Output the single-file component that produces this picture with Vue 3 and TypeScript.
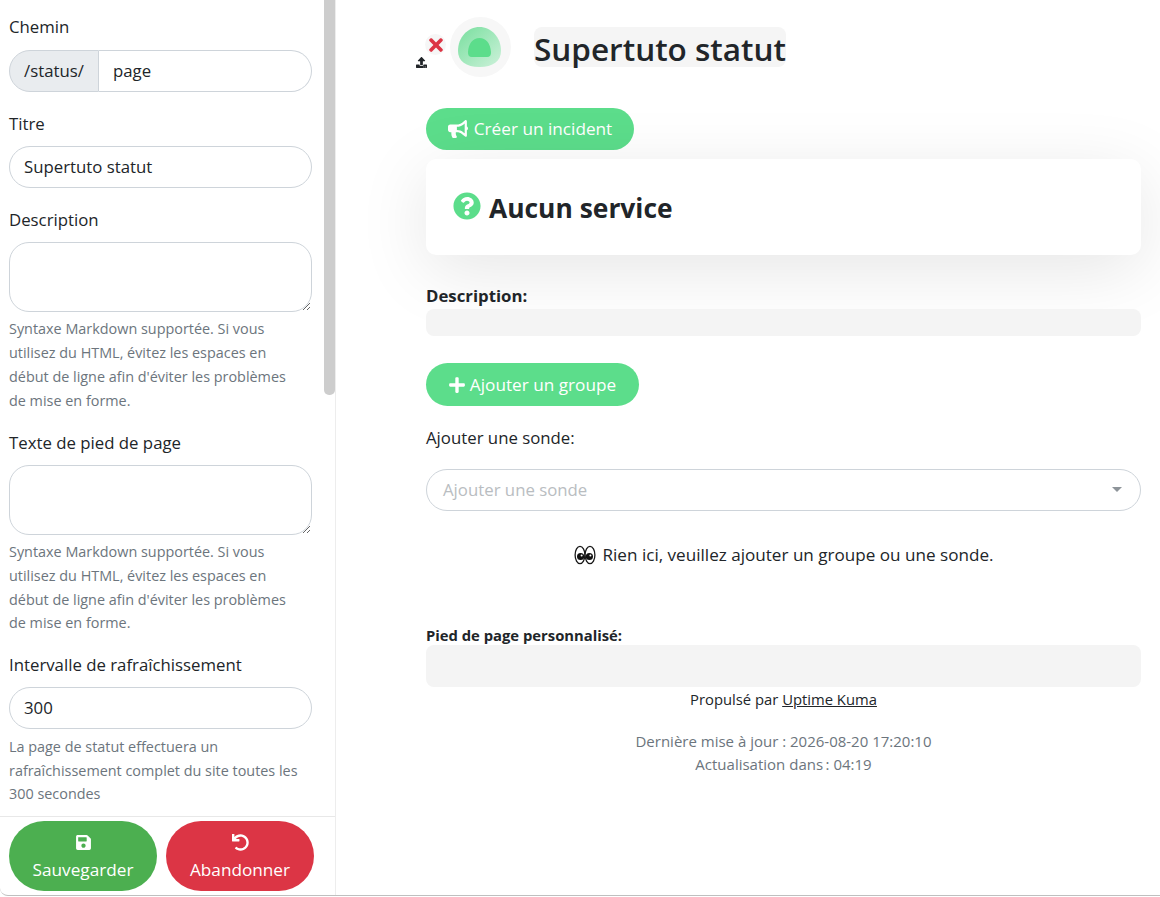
<script setup lang="ts">
const hint = "Syntaxe Markdown supportée. Si vous utilisez du HTML, évitez les espaces en début de ligne afin d'éviter les problèmes de mise en forme.";
</script>

<template>
  <div class="frame">
    <aside class="sidebar">
      <div class="scroll">
        <div class="fields">
          <div class="field">
            <label>Chemin</label>
            <div class="group">
              <span class="prefix">/status/</span>
              <input class="control joined" value="page" />
            </div>
          </div>
          <div class="field">
            <label>Titre</label>
            <input class="control" value="Supertuto statut" />
          </div>
          <div class="field">
            <label>Description</label>
            <textarea class="control area"></textarea>
            <p class="help">{{ hint }}</p>
          </div>
          <div class="field">
            <label>Texte de pied de page</label>
            <textarea class="control area"></textarea>
            <p class="help">{{ hint }}</p>
          </div>
          <div class="field field-last">
            <label>Intervalle de rafraîchissement</label>
            <input class="control" value="300" />
            <p class="help help-last">La page de statut effectuera un rafraîchissement complet du site toutes les 300 secondes</p>
          </div>
        </div>
        <div class="thumb"></div>
      </div>
      <div class="actions">
        <button class="big save">
          <svg viewBox="0 0 448 512" class="big-icon"><path fill="currentColor" d="M433.941 129.941l-83.882-83.882A48 48 0 0 0 316.118 32H48C21.49 32 0 53.49 0 80v352c0 26.51 21.49 48 48 48h352c26.51 0 48-21.49 48-48V163.882a48 48 0 0 0-14.059-33.941zM224 416c-35.346 0-64-28.654-64-64 0-35.346 28.654-64 64-64s64 28.654 64 64c0 35.346-28.654 64-64 64zm96-304.52V212c0 6.627-5.373 12-12 12H76c-6.627 0-12-5.373-12-12V108c0-6.627 5.373-12 12-12h228.52c3.183 0 6.235 1.264 8.485 3.515l3.48 3.48A11.996 11.996 0 0 1 320 111.48z"/></svg>
          <span>Sauvegarder</span>
        </button>
        <button class="big discard">
          <svg viewBox="0 0 512 512" class="big-icon"><path fill="currentColor" d="M212.333 224.333H12c-6.627 0-12-5.373-12-12V12C0 5.373 5.373 0 12 0h48c6.627 0 12 5.373 12 12v78.112C117.773 39.279 184.26 7.47 258.175 8.007c136.906.994 246.448 111.623 246.157 248.532C504.041 393.258 393.12 504 256.333 504c-64.089 0-122.496-24.313-166.51-64.215-5.099-4.622-5.334-12.554-.467-17.42l33.967-33.967c4.474-4.474 11.662-4.717 16.401-.525C170.76 415.336 211.58 432 256.333 432c97.268 0 176-78.716 176-176 0-97.267-78.716-176-176-176-58.496 0-110.28 28.476-142.274 72.333h98.274c6.627 0 12 5.373 12 12v48c0 6.627-5.373 12-12 12z"/></svg>
          <span>Abandonner</span>
        </button>
      </div>
    </aside>

    <main class="main">
      <header class="title-row">
        <div class="logo-wrap">
          <span class="logo-x">
            <svg viewBox="0 0 352 512"><path fill="currentColor" d="M242.72 256l100.07-100.07c12.28-12.28 12.28-32.19 0-44.48l-22.24-22.24c-12.28-12.28-32.19-12.28-44.48 0L176 189.28 75.93 89.21c-12.28-12.28-32.19-12.28-44.48 0L9.21 111.45c-12.28 12.28-12.28 32.19 0 44.48L109.28 256 9.21 356.07c-12.28 12.28-12.28 32.19 0 44.48l22.24 22.24c12.28 12.28 32.2 12.28 44.48 0L176 322.72l100.07 100.07c12.28 12.28 32.2 12.28 44.48 0l22.24-22.24c12.28-12.28 12.28-32.19 0-44.48L242.72 256z"/></svg>
          </span>
          <span class="logo-up">
            <svg viewBox="0 0 512 512"><path fill="currentColor" d="M296 384h-80c-13.3 0-24-10.7-24-24V192h-87.7c-17.8 0-26.7-21.5-14.1-34.1L242.3 5.7c7.5-7.5 19.8-7.5 27.3 0l152.2 152.2c12.6 12.6 3.7 34.1-14.1 34.1H320v168c0 13.3-10.7 24-24 24zm216-8v112c0 13.3-10.7 24-24 24H24c-13.3 0-24-10.7-24-24V376c0-13.3 10.7-24 24-24h136v8c0 30.9 25.1 56 56 56h80c30.9 0 56-25.1 56-56v-8h136c13.3 0 24 10.7 24 24zm-124 88c0-11-9-20-20-20s-20 9-20 20 9 20 20 20 20-9 20-20zm64 0c0-11-9-20-20-20s-20 9-20 20 9 20 20 20 20-9 20-20z"/></svg>
          </span>
          <div class="logo">
            <svg viewBox="0 0 43 40" width="43" height="40">
              <defs>
                <linearGradient id="blob" x1="0" y1="0" x2="1" y2="1">
                  <stop offset="0" stop-color="#78df9e" />
                  <stop offset="1" stop-color="#cdf1da" />
                </linearGradient>
              </defs>
              <path fill="url(#blob)" d="M21.5 0C33 0 43 10 43 24c0 10-8 16-21.500 16S0 34 0 24C0 10 10 0 21.500 0z"/>
              <path fill="#5cdd8b" d="M21.500 11c6.500 0 11 5.500 11.500 14 .2 3-1 5-4 5H14c-3 0-4.200-2-4-5 .5-8.500 5-14 11.500-14z"/>
            </svg>
          </div>
        </div>
        <h1 class="title">Supertuto statut</h1>
      </header>

      <button class="pill incident">
        <svg viewBox="0 0 576 512" class="pill-icon"><path fill="currentColor" d="M576 240c0-23.63-12.95-44.04-32-55.12V32.01C544 23.26 537.02 0 512 0c-7.12 0-14.19 2.38-19.98 7.02l-85.03 68.03C364.28 109.19 310.66 128 256 128H64c-35.35 0-64 28.65-64 64v96c0 35.35 28.65 64 64 64h33.7c-1.39 10.48-2.18 21.14-2.18 32 0 39.77 9.26 77.35 25.56 110.94 5.19 10.69 16.52 17.06 28.4 17.06h74.28c26.05 0 41.69-29.84 25.9-50.56-16.4-21.52-26.15-48.36-26.15-77.44 0-11.11 1.62-21.79 4.41-32H256c54.66 0 108.28 18.81 150.98 52.95l85.03 68.03a32.023 32.023 0 0 0 19.98 7.02c24.92 0 32-22.78 32-32V295.13C563.05 284.04 576 263.63 576 240zm-96 141.42l-33.05-26.44C392.95 311.78 325.12 288 256 288v-96c69.12 0 136.95-23.78 190.95-66.98L480 98.58v282.84z"/></svg>
        Créer un incident
      </button>

      <section class="card">
        <svg viewBox="0 0 512 512" class="q-icon"><path fill="#5cdd8b" d="M504 256c0 136.997-111.043 248-248 248S8 392.997 8 256C8 119.083 119.043 8 256 8s248 111.083 248 248zM262.655 90c-54.497 0-89.255 22.957-116.549 63.758-3.536 5.286-2.353 12.415 2.715 16.258l34.699 26.31c5.205 3.947 12.621 3.008 16.665-2.122 17.864-22.658 30.113-35.797 57.303-35.797 20.429 0 45.698 13.148 45.698 32.958 0 14.976-12.363 22.667-32.534 33.976C247.128 238.528 216 254.941 216 296v4c0 6.627 5.373 12 12 12h56c6.627 0 12-5.373 12-12v-1.333c0-28.462 83.186-29.647 83.186-106.667 0-58.002-60.165-102-116.531-102zM256 338c-25.365 0-46 20.635-46 46 0 25.364 20.635 46 46 46s46-20.636 46-46c0-25.365-20.635-46-46-46z"/></svg>
        <span>Aucun service</span>
      </section>

      <strong class="desc-label">Description:</strong>
      <div class="editable desc-box"></div>

      <button class="pill group-btn">
        <svg viewBox="0 0 448 512" class="plus-icon"><path fill="currentColor" d="M416 208H272V64c0-17.67-14.33-32-32-32h-32c-17.67 0-32 14.33-32 32v144H32c-17.67 0-32 14.33-32 32v32c0 17.67 14.33 32 32 32h144v144c0 17.67 14.33 32 32 32h32c17.67 0 32-14.33 32-32V304h144c17.67 0 32-14.33 32-32v-32c0-17.67-14.33-32-32-32z"/></svg>
        Ajouter un groupe
      </button>

      <div class="probe-label">Ajouter une sonde:</div>
      <div class="select">
        <span>Ajouter une sonde</span>
        <i class="caret"></i>
      </div>

      <div class="empty">
        <svg viewBox="0 0 22 20" class="eyes">
          <ellipse cx="6" cy="10" rx="4.900" ry="8.600" fill="#fff" stroke="#1a1a1a" stroke-width="1.300" />
          <ellipse cx="16" cy="10" rx="4.900" ry="8.600" fill="#fff" stroke="#1a1a1a" stroke-width="1.300" />
          <circle cx="6.600" cy="11.500" r="3.600" fill="#111" />
          <circle cx="15.400" cy="11.500" r="3.600" fill="#111" />
          <circle cx="7.600" cy="10.500" r="1" fill="#fff" />
          <circle cx="16.400" cy="10.500" r="1" fill="#fff" />
        </svg>
        <span>Rien ici, veuillez ajouter un groupe ou une sonde.</span>
      </div>

      <strong class="foot-label">Pied de page personnalisé:</strong>
      <div class="editable foot-box"></div>
      <div class="powered">Propulsé par <a>Uptime Kuma</a></div>
      <div class="updated">
        <div>Dernière mise à jour : 2026-08-20 17:20:10</div>
        <div>Actualisation dans&#8201;: 04:19</div>
      </div>
    </main>
  </div>
</template>

<style>
html, body { margin: 0; background: #fff; }
</style>

<style scoped>
.frame {
  --sans: "Open Sans", "Noto Sans", sans-serif;
  display: flex;
  height: 896px;
  box-sizing: border-box;
  overflow: hidden;
  border-bottom: 1px solid #bfbfbf;
  border-bottom-left-radius: 8px;
  font-family: var(--sans);
  font-size: 16.8px;
  line-height: 27.8px;
  color: #212529;
}
.sidebar {
  width: 336px;
  flex: none;
  box-sizing: border-box;
  border-right: 1px solid #ededed;
  display: flex;
  flex-direction: column;
}
.scroll {
  position: relative;
  height: 816px;
  flex: none;
  overflow: hidden;
}
.thumb {
  position: absolute;
  top: 0;
  right: 0;
  width: 11px;
  height: 395px;
  background: #cdcdcd;
  border-radius: 0 0 5px 5px;
}
.fields { padding: 13.2px 23px 0 9px; }
.field { margin-bottom: 17.5px; }
.field-last { margin-top: -2px; }
.field label { display: block; margin-bottom: 8.7px; color: #212529; }
.control {
  display: block;
  width: 100%;
  box-sizing: border-box;
  height: 42.4px;
  padding: 5px 14px 7px;
  border: 1px solid #ced4da;
  border-radius: 21px;
  font: inherit;
  color: #212529;
  background: #fff;
  outline: none;
}
.area { height: 70px; border-radius: 20px; resize: vertical; }
.group { display: flex; height: 42.4px; }
.prefix {
  flex: none;
  box-sizing: border-box;
  width: 90px;
  padding: 6px 0 6px 14px;
  background: #e9ecef;
  border: 1px solid #ced4da;
  border-radius: 21px 0 0 21px;
  color: #212529;
}
.joined { flex: 1; min-width: 0; border-left: 0; border-radius: 0 21px 21px 0; padding: 6px 14px; }
.help {
  margin: 5px 0 -1px;
  max-width: 295px;
  font-size: 14.4px;
  line-height: 23.7px;
  color: #6c757d;
}
.help-last { margin-top: 5.5px; }
.actions {
  flex: 1;
  display: flex;
  gap: 9px;
  padding: 4px 0 0 9px;
  border-top: 1px solid #e8e8e8;
}
.big {
  width: 148px;
  height: 70px;
  border: 0;
  border-radius: 35px;
  color: #fff;
  font-family: inherit;
  font-size: 17.2px;
  line-height: 26px;
  display: flex;
  flex-direction: column;
  align-items: center;
  justify-content: center;
  padding: 4px 0 0;
}
.big-icon { width: 17px; height: 17px; margin-bottom: 6px; }
.save { background: #4caf50; }
.discard { background: #dc3545; }

.main {
  flex: 1;
  min-width: 0;
  padding: 17px 19px 0 90px;
  display: flex;
  flex-direction: column;
  align-items: flex-start;
}
.title-row { display: flex; align-items: center; height: 60px; }
.logo-wrap { position: relative; width: 85px; height: 60px; }
.logo {
  position: absolute;
  left: 24px;
  top: 0;
  width: 61px;
  height: 60px;
  border-radius: 50%;
  background: #f7f7f7;
  display: flex;
  align-items: center;
  justify-content: center;
}
.logo svg { margin-left: -3px; }
.logo-x {
  position: absolute;
  z-index: 1;
  left: -1px;
  top: 17px;
  width: 21px;
  height: 21px;
  border-radius: 50%;
  background: #f6f6f6;
  color: #dc3545;
  display: flex;
  align-items: center;
  justify-content: center;
}
.logo-x svg { width: 14px; height: 20px; }
.logo-up {
  position: absolute;
  z-index: 1;
  left: -15px;
  top: 35px;
  width: 21px;
  height: 21px;
  border-radius: 50%;
  background: #fff;
  color: #212529;
  display: flex;
  align-items: center;
  justify-content: center;
}
.logo-up svg { width: 11px; height: 11px; }
.title {
  margin: 0 0 0 23px;
  padding: 0;
  height: 40px;
  background: #f5f5f5;
  border-radius: 8px;
  font-size: 31.5px;
  font-weight: 600;
  line-height: 44px;
  white-space: nowrap;
}
.pill {
  border: 0;
  border-radius: 22px;
  background: #5cdd8b;
  color: #fff;
  font: inherit;
  font-size: 17.2px;
  display: flex;
  align-items: center;
  justify-content: center;
  padding: 0;
}
.incident { width: 208px; height: 42px; margin-top: 31px; gap: 6px; }
.pill-icon { width: 20px; height: 18px; }
.card {
  align-self: stretch;
  height: 96px;
  margin-top: 9px;
  box-sizing: border-box;
  border-radius: 10px;
  background: #fff;
  box-shadow: 0 15px 70px rgba(0, 0, 0, 0.1);
  display: flex;
  align-items: center;
  gap: 8px;
  padding: 0 27px;
  font-size: 26.4px;
  font-weight: 700;
  line-height: 1;
}
.card span { margin-top: 2px; }
.q-icon { width: 28px; height: 28px; margin-top: -2px; }
.desc-label { margin-top: 27.6px; font-weight: 700; line-height: 26.4px; }
.editable { align-self: stretch; background: #f4f4f4; border-radius: 8px; }
.desc-box { height: 27px; }
.group-btn { width: 213px; height: 43px; margin-top: 27px; gap: 5px; }
.plus-icon { width: 16px; height: 18px; }
.probe-label { margin-top: 17.6px; }
.select {
  align-self: stretch;
  box-sizing: border-box;
  height: 42px;
  margin-top: 17.6px;
  border: 1px solid #ced4da;
  border-radius: 21px;
  padding: 0 16px;
  display: flex;
  align-items: center;
  justify-content: space-between;
  color: #b9bdc1;
}
.caret {
  width: 0;
  height: 0;
  margin-right: 2px;
  border-left: 5px solid transparent;
  border-right: 5px solid transparent;
  border-top: 5px solid #8d9499;
}
.empty {
  align-self: stretch;
  margin-top: 30px;
  display: flex;
  justify-content: center;
  align-items: center;
  gap: 7px;
  font-size: 17.1px;
}
.eyes { width: 22px; height: 20px; }
.foot-label { margin-top: 54px; font-size: 14.8px; font-weight: 700; line-height: 24px; }
.foot-box { height: 42px; margin-top: -2px; }
.powered { align-self: stretch; text-align: center; font-size: 14.8px; margin-top: 0; line-height: 24px; }
.powered a { color: #212529; text-decoration: underline; }
.updated {
  align-self: stretch;
  text-align: center;
  font-size: 15px;
  color: #6c757d;
  margin-top: 19px;
  line-height: 22.8px;
}
</style>
